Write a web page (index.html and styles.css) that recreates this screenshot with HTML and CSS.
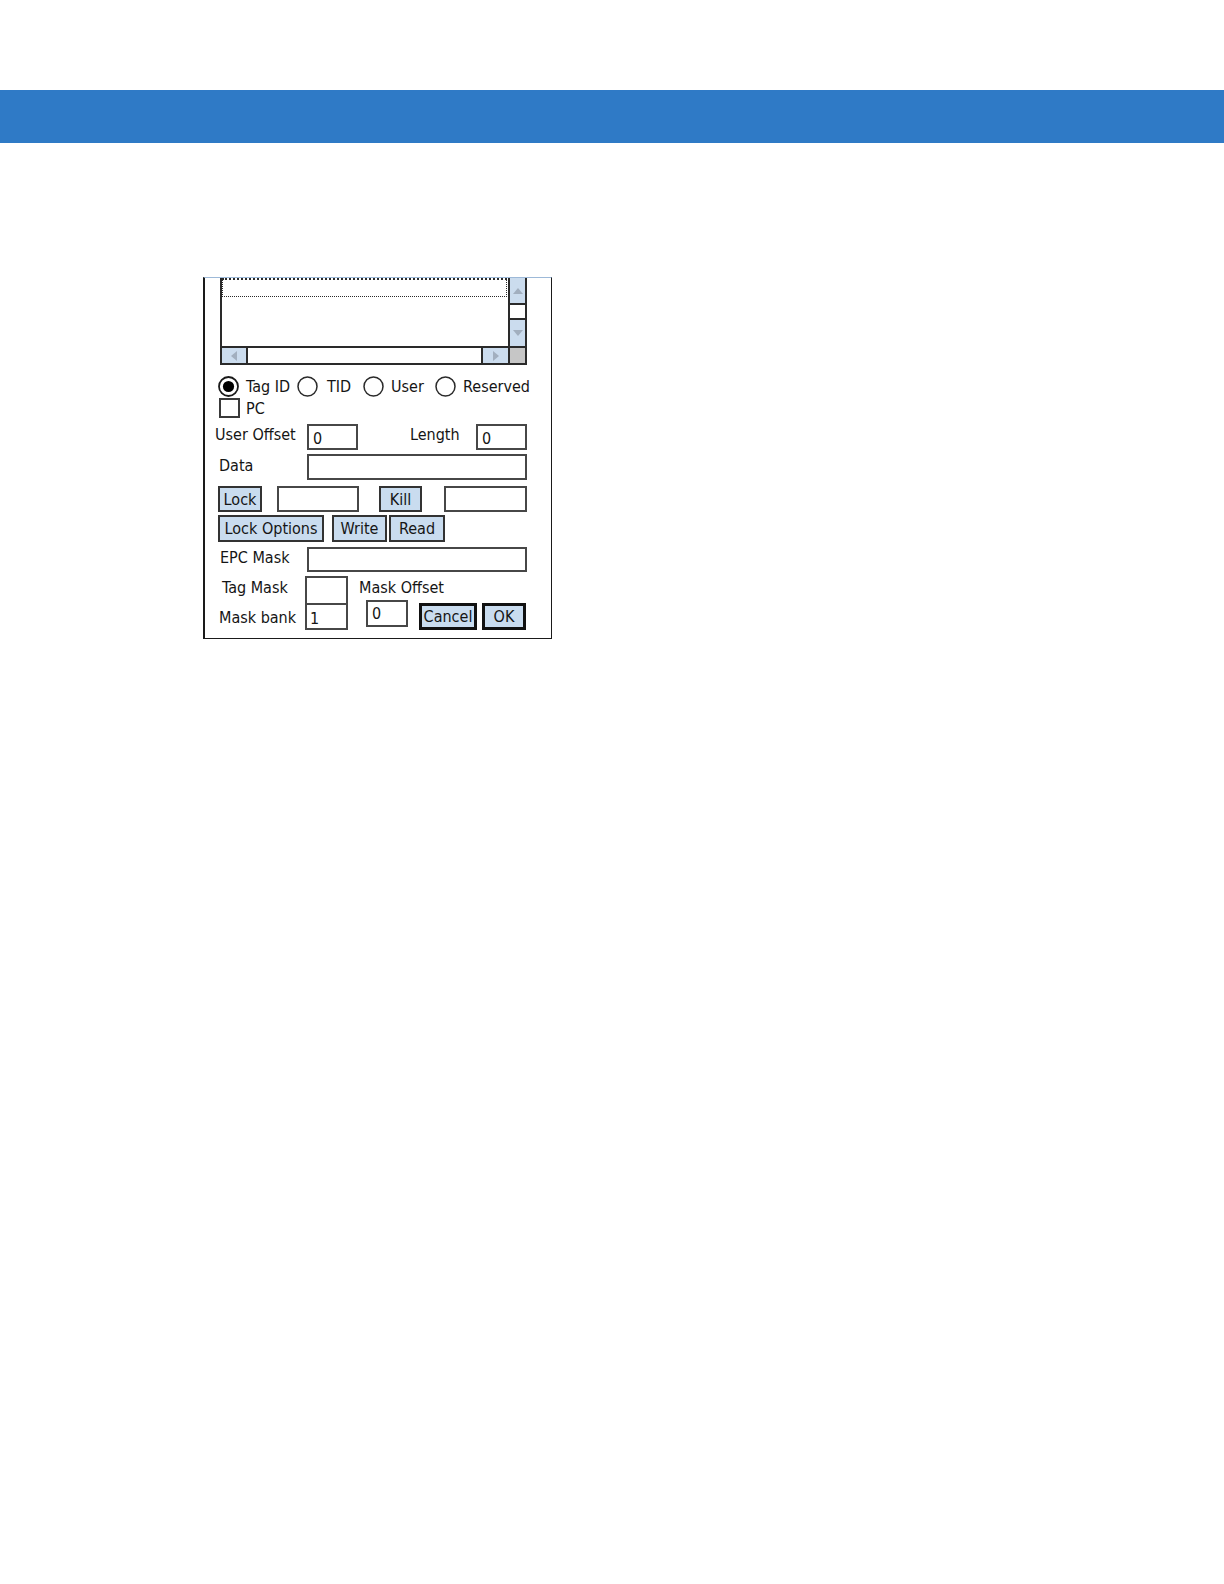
FILE: index.html
```html
<!DOCTYPE html>
<html lang="en">
<head>
<meta charset="utf-8">
<title>Tag Options</title>
<link rel="stylesheet" href="styles.css">
</head>
<body>
<div class="topbar"></div>

<div class="dialog">
  <div class="listbox">
    <div class="list-area"><div class="focus-row"></div></div>
    <div class="vscroll">
      <div class="sbtn vbtn up-btn"><span class="arrow arrow-up"></span></div>
      <div class="thumb"></div>
      <div class="sbtn vbtn down-btn"><span class="arrow arrow-down"></span></div>
    </div>
    <div class="hscroll">
      <div class="sbtn left-btn"><span class="arrow arrow-left"></span></div>
      <div class="track"></div>
      <div class="sbtn right-btn"><span class="arrow arrow-right"></span></div>
    </div>
    <div class="corner"></div>
  </div>

  <div class="radios">
    <div class="opt opt-tag">
      <svg class="radio" width="21" height="21" viewBox="0 0 21 21"><circle cx="10.5" cy="10.5" r="9.5" fill="#fff" stroke="#1a1a1a" stroke-width="1.8"/><circle cx="10.5" cy="10.5" r="5.6" fill="#000"/></svg>
      <span>Tag ID</span>
    </div>
    <div class="opt opt-tid">
      <svg class="radio" width="21" height="21" viewBox="0 0 21 21"><circle cx="10.5" cy="10.5" r="9.5" fill="#fff" stroke="#2a2a2a" stroke-width="1.5"/></svg>
      <span class="tid-label">TID</span>
    </div>
    <div class="opt opt-user">
      <svg class="radio" width="21" height="21" viewBox="0 0 21 21"><circle cx="10.5" cy="10.5" r="9.5" fill="#fff" stroke="#2a2a2a" stroke-width="1.5"/></svg>
      <span>User</span>
    </div>
    <div class="opt opt-res">
      <svg class="radio" width="21" height="21" viewBox="0 0 21 21"><circle cx="10.5" cy="10.5" r="9.5" fill="#fff" stroke="#2a2a2a" stroke-width="1.5"/></svg>
      <span>Reserved</span>
    </div>
  </div>

  <div class="check-row">
    <span class="checkbox"></span>
    <span class="check-label">PC</span>
  </div>

  <div class="row row-offset">
    <span class="lbl lbl-offset">User Offset</span>
    <div class="field f-offset"><span class="val">0</span></div>
    <span class="lbl lbl-length">Length</span>
    <div class="field f-length"><span class="val">0</span></div>
  </div>

  <div class="row row-data">
    <span class="lbl lbl-data">Data</span>
    <div class="field f-wide"></div>
  </div>

  <div class="row row-lock">
    <div class="btn b-lock">Lock</div>
    <div class="field f-lock"></div>
    <div class="btn b-kill">Kill</div>
    <div class="field f-kill"></div>
  </div>

  <div class="row row-ops">
    <div class="btn b-opts">Lock Options</div>
    <div class="btn b-write">Write</div>
    <div class="btn b-read">Read</div>
  </div>

  <div class="row row-epc">
    <span class="lbl lbl-epc">EPC Mask</span>
    <div class="field f-wide"></div>
  </div>

  <div class="mask-area">
    <div class="mask-labels">
      <span class="lbl lbl-tagmask">Tag Mask</span>
      <span class="lbl lbl-bank">Mask bank</span>
    </div>
    <div class="mask-boxes">
      <div class="field box-tag"></div>
      <div class="field box-bank"><span class="val">1</span></div>
    </div>
    <div class="mask-right">
      <span class="lbl lbl-moff">Mask Offset</span>
      <div class="mask-actions">
        <div class="field f-moff"><span class="val">0</span></div>
        <div class="btn btn-strong b-cancel">Cancel</div>
        <div class="btn btn-strong b-ok">OK</div>
      </div>
    </div>
  </div>
</div>
</body>
</html>
```

FILE: styles.css
```css
html, body {
  margin: 0;
  padding: 0;
  background: #ffffff;
}

body {
  font-family: "DejaVu Sans Condensed", "DejaVu Sans", "Liberation Sans", sans-serif;
  font-stretch: condensed;
  font-size: 16px;
  color: #151515;
}

.topbar {
  margin-top: 90px;
  height: 53px;
  background: #2f7ac6;
}

.dialog {
  box-sizing: border-box;
  margin-top: 134px;
  margin-left: 203px;
  width: 349px;
  height: 362px;
  border-top: 1px solid #9db9d8;
  border-left: 2px solid #1a1a1a;
  border-right: 1px solid #1a1a1a;
  border-bottom: 1px solid #1a1a1a;
  background: #ffffff;
  box-shadow: 0 1px 0 #cfcfcf;
  display: flex;
  flex-direction: column;
}

/* ---------- list box ---------- */
.listbox {
  box-sizing: border-box;
  margin-left: 15px;
  width: 307px;
  height: 87px;
  border: 2px solid #2a2a2a;
  border-top: none;
  display: grid;
  grid-template-columns: 1fr 17px;
  grid-template-rows: 1fr 17px;
  background: #fff;
}

.list-area {
  padding-right: 1px;
}

.focus-row {
  box-sizing: border-box;
  height: 19px;
  border: 1px dotted #2a2a2a;
  border-top: 2px dotted #2a2a2a;
}

.vscroll {
  border-left: 2px solid #2a2a2a;
  display: flex;
  flex-direction: column;
}

.sbtn {
  background: #cbdcee;
  display: flex;
  align-items: center;
  justify-content: center;
}

.up-btn {
  height: 25px;
  border-bottom: 2px solid #2a2a2a;
}

.thumb {
  height: 13px;
  background: #ffffff;
}

.down-btn {
  flex: 1;
  border-top: 2px solid #2a2a2a;
}

.hscroll {
  border-top: 2px solid #2a2a2a;
  display: flex;
}

.left-btn {
  width: 24px;
  border-right: 2px solid #2a2a2a;
}

.track {
  flex: 1;
  background: #ffffff;
}

.right-btn {
  width: 25px;
  border-left: 2px solid #2a2a2a;
}

.corner {
  border-top: 2px solid #2a2a2a;
  border-left: 2px solid #2a2a2a;
  background: #c6c6c6;
}

.arrow {
  width: 0;
  height: 0;
  display: block;
}

.arrow-up {
  border-left: 5px solid transparent;
  border-right: 5px solid transparent;
  border-bottom: 6px solid #a2afbf;
}

.arrow-down {
  border-left: 5px solid transparent;
  border-right: 5px solid transparent;
  border-top: 6px solid #a2afbf;
}

.arrow-left {
  border-top: 5px solid transparent;
  border-bottom: 5px solid transparent;
  border-right: 6px solid #a2afbf;
}

.arrow-right {
  border-top: 5px solid transparent;
  border-bottom: 5px solid transparent;
  border-left: 6px solid #a2afbf;
}

/* ---------- radios ---------- */
.radios {
  margin-top: 11px;
  margin-left: 13px;
  height: 21px;
  display: grid;
  grid-template-columns: 79px 66px 72px auto;
}

.opt {
  display: flex;
  align-items: center;
  gap: 7px;
  line-height: 21px;
  white-space: nowrap;
}

.radio {
  flex: none;
  display: block;
}

.tid-label {
  margin-left: 2px;
}

/* ---------- checkbox ---------- */
.check-row {
  margin-top: 1px;
  margin-left: 14px;
  height: 20px;
  display: flex;
  align-items: center;
  gap: 6px;
}

.checkbox {
  box-sizing: border-box;
  width: 21px;
  height: 20px;
  border: 2px solid #3a3a3a;
  background: #fff;
}

.check-label {
  line-height: 22px;
  padding-top: 2px;
}

/* ---------- generic rows ---------- */
.row {
  display: flex;
  align-items: flex-start;
}

.lbl {
  white-space: nowrap;
  box-sizing: border-box;
}

.field {
  box-sizing: border-box;
  border: 2px solid #474747;
  background: #fff;
  display: flex;
  align-items: flex-end;
  padding: 0 0 0 4px;
  line-height: 18px;
}

.btn {
  box-sizing: border-box;
  border: 2px solid #333;
  background: #c9dcef;
  display: flex;
  align-items: center;
  justify-content: center;
  white-space: nowrap;
  line-height: 18px;
}

.btn-strong {
  border: 3px solid #111;
}

/* row: user offset / length */
.row-offset {
  margin-top: 6px;
  height: 26px;
}

.lbl-offset {
  margin-left: 10px;
  width: 92px;
  line-height: 22px;
}

.f-offset {
  width: 51px;
  height: 26px;
}

.lbl-length {
  margin-left: 52px;
  width: 66px;
  line-height: 22px;
}

.f-length {
  width: 51px;
  height: 26px;
}

/* row: data */
.row-data {
  margin-top: 4px;
  height: 26px;
}

.lbl-data {
  margin-left: 14px;
  width: 88px;
  line-height: 23px;
}

.f-wide {
  width: 220px;
  height: 26px;
}

/* row: lock / kill */
.row-lock {
  margin-top: 6px;
  height: 26px;
}

.b-lock {
  margin-left: 13px;
  width: 44px;
  height: 26px;
  padding-top: 1px;
}

.f-lock {
  margin-left: 15px;
  width: 82px;
  height: 26px;
}

.b-kill {
  margin-left: 20px;
  width: 43px;
  height: 26px;
  padding-top: 1px;
}

.f-kill {
  margin-left: 22px;
  width: 83px;
  height: 26px;
}

/* row: lock options / write / read */
.row-ops {
  margin-top: 3px;
  height: 27px;
}

.b-opts {
  margin-left: 13px;
  width: 106px;
  height: 27px;
}

.b-write {
  margin-left: 8px;
  width: 55px;
  height: 27px;
}

.b-read {
  margin-left: 2px;
  width: 56px;
  height: 27px;
}

/* row: epc mask */
.row-epc {
  margin-top: 5px;
  height: 25px;
}

.lbl-epc {
  margin-left: 15px;
  width: 87px;
  line-height: 21px;
}

.row-epc .f-wide {
  height: 25px;
}

/* mask area */
.mask-area {
  margin-top: 4px;
  height: 54px;
  display: flex;
}

.mask-labels {
  margin-left: 14px;
  width: 86px;
  display: flex;
  flex-direction: column;
}

.lbl-tagmask {
  padding-left: 3px;
  height: 27px;
  line-height: 24px;
}

.lbl-bank {
  height: 27px;
  line-height: 29px;
}

.mask-boxes {
  width: 43px;
  display: flex;
  flex-direction: column;
}

.box-tag {
  height: 27px;
  border-bottom: none;
}

.box-bank {
  height: 27px;
  padding-left: 3px;
}

.mask-right {
  margin-left: 11px;
  display: flex;
  flex-direction: column;
}

.lbl-moff {
  height: 22px;
  line-height: 23px;
}

.mask-actions {
  margin-top: 2px;
  display: flex;
  align-items: flex-start;
}

.f-moff {
  margin-left: 7px;
  width: 42px;
  height: 27px;
  align-items: flex-start;
  padding-top: 3px;
}

.b-cancel {
  margin-left: 11px;
  margin-top: 3px;
  width: 58px;
  height: 27px;
}

.b-ok {
  margin-left: 5px;
  margin-top: 3px;
  width: 44px;
  height: 27px;
}
```
